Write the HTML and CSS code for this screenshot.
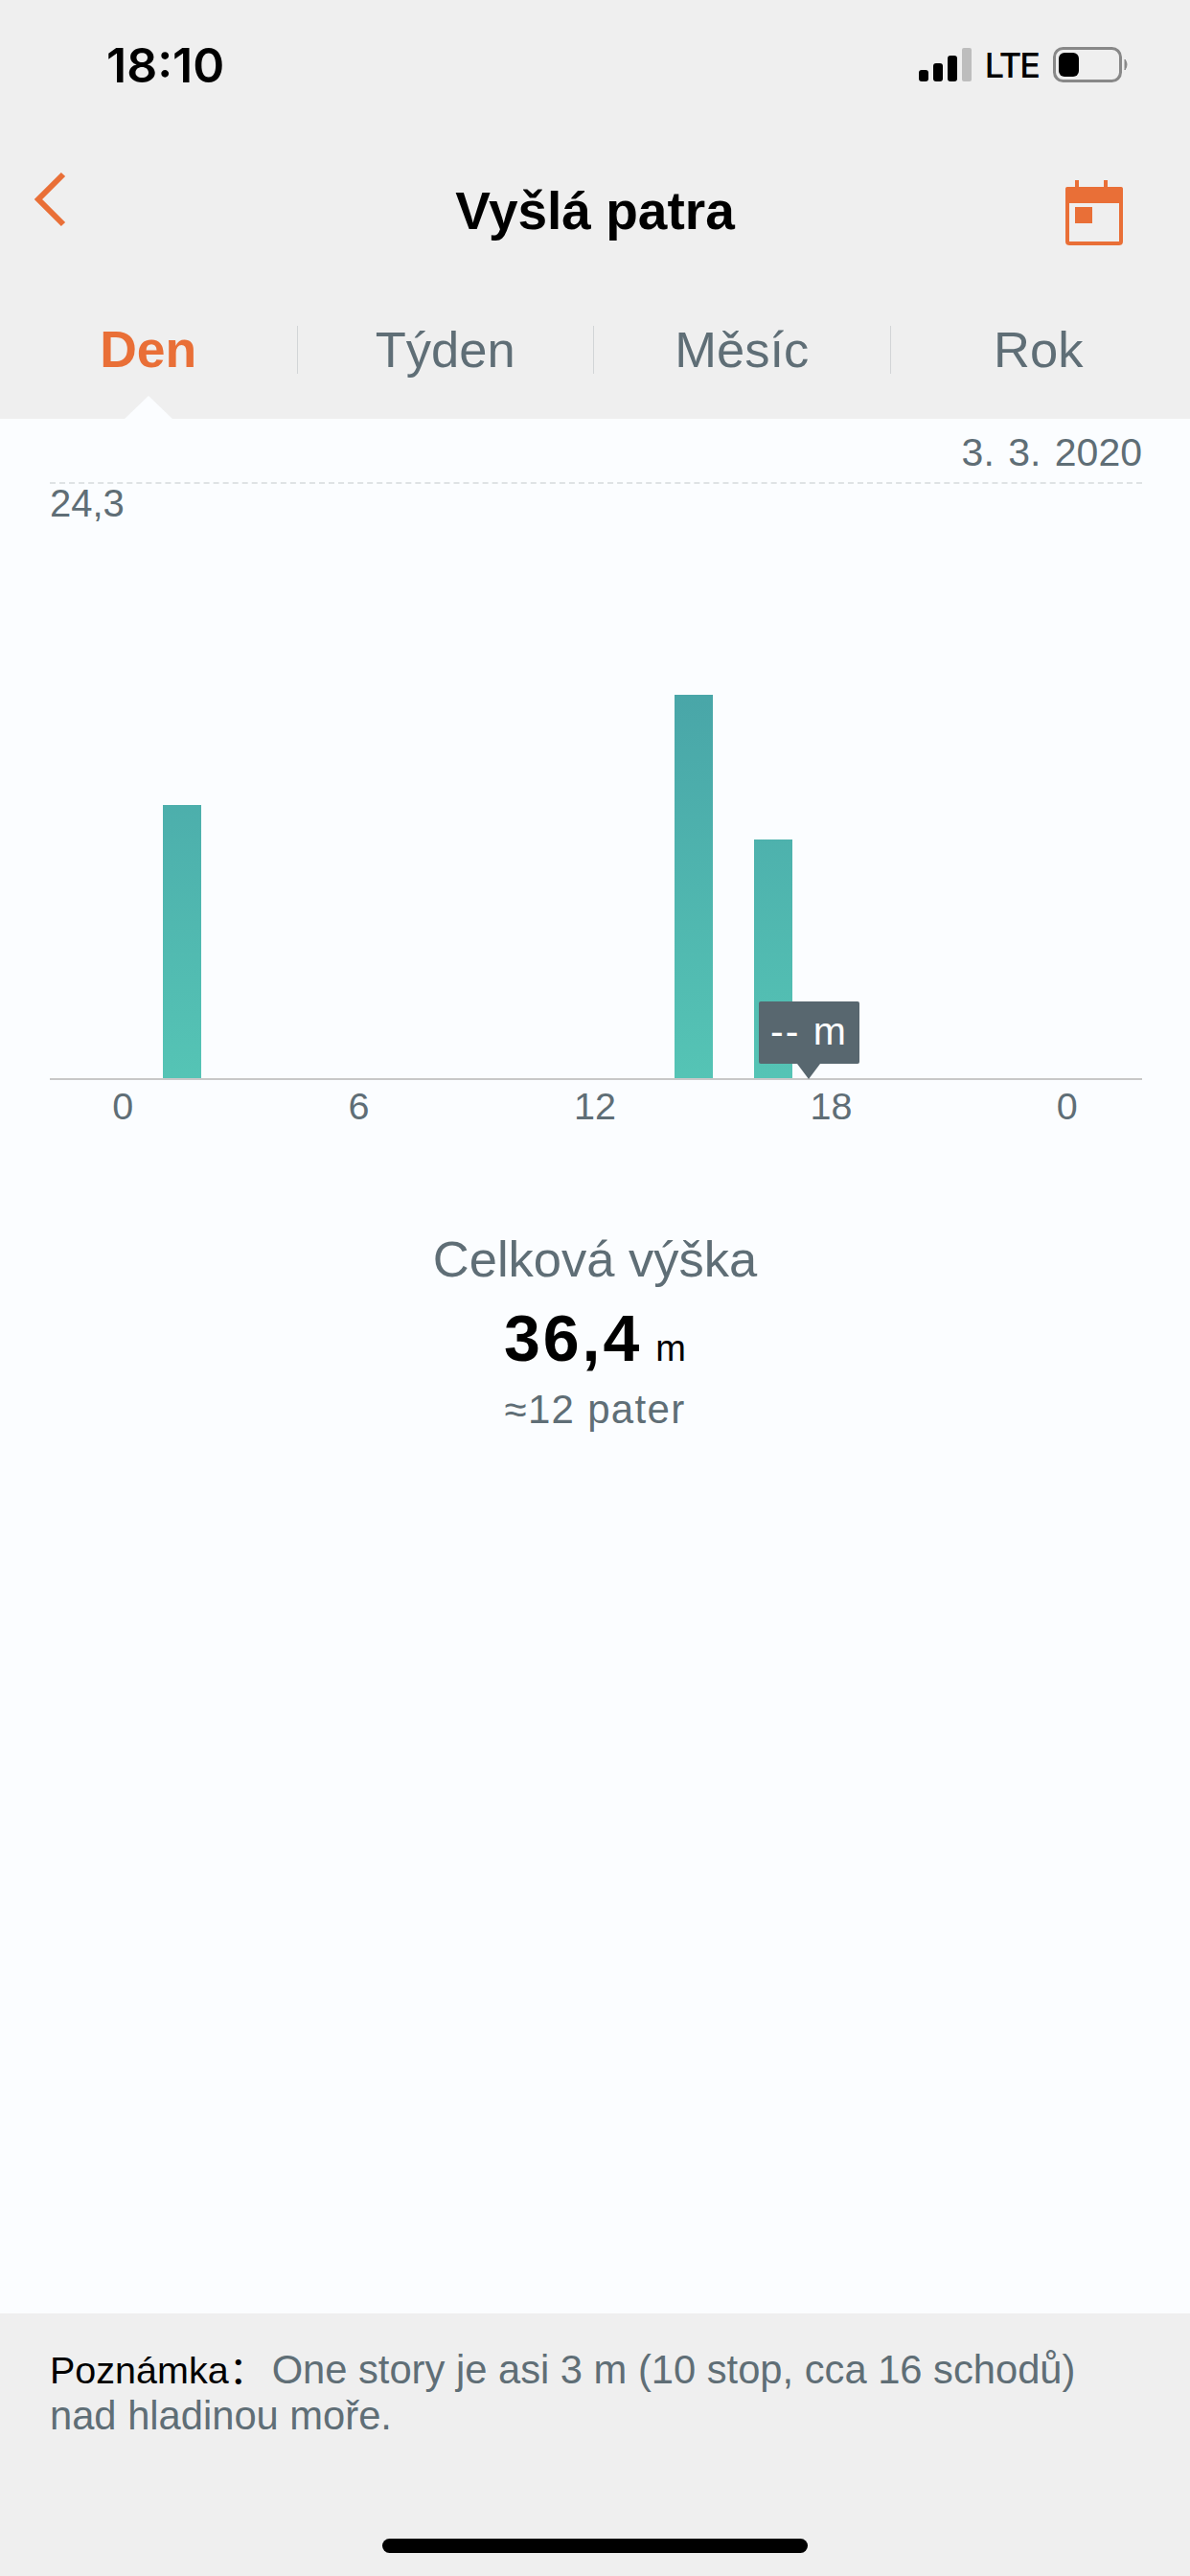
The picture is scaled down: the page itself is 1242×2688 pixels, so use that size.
FILE: index.html
```html
<!DOCTYPE html>
<html lang="cs">
<head>
    <meta charset="UTF-8">
    <meta name="viewport" content="width=device-width, initial-scale=1.0">
    <title>Vyšlá patra</title>
    <link rel="stylesheet" href="styles.css">
</head>
<body>
    <div class="screen">
        <header class="top">
            <div class="status-bar">
                <span class="time">18:10</span>
                <div class="status-icons">
                    <svg class="signal" width="56" height="36" viewBox="0 0 56 36">
                        <rect x="0" y="23" width="10" height="12" rx="3" fill="#000"/>
                        <rect x="15" y="16" width="10" height="19" rx="3" fill="#000"/>
                        <rect x="30" y="8" width="10" height="27" rx="3" fill="#000"/>
                        <rect x="45" y="0" width="10" height="35" rx="2" fill="#bdbdbd"/>
                    </svg>
                    <span class="network">LTE</span>
                    <svg class="battery" width="80" height="38" viewBox="0 0 80 38">
                        <rect x="1.5" y="1.5" width="69" height="34" rx="9" fill="none" stroke="#888" stroke-width="3"/>
                        <rect x="6" y="6" width="21" height="25" rx="6" fill="#000"/>
                        <path d="M75 13 Q79 18 75 24 Z" fill="#888" stroke="#888" stroke-width="1"/>
                    </svg>
                </div>
            </div>
            <div class="nav-bar">
                <svg class="back" width="40" height="64" viewBox="0 0 40 64">
                    <path d="M33 6 L7 32 L33 58" fill="none" stroke="#e96f37" stroke-width="6"/>
                </svg>
                <h1>Vyšlá patra</h1>
                <svg class="calendar" width="60" height="68" viewBox="0 0 60 68">
                    <path d="M12 0 V8 M42 0 V8" stroke="#e96f37" stroke-width="4"/>
                    <rect x="2" y="9" width="56" height="57" rx="2" fill="none" stroke="#e96f37" stroke-width="4"/>
                    <rect x="0" y="7" width="60" height="17" rx="2" fill="#e96f37"/>
                    <rect x="10" y="28" width="18" height="17" fill="#e96f37"/>
                </svg>
            </div>
            <nav class="tabs">
                <a class="tab active">Den</a>
                <a class="tab">Týden</a>
                <a class="tab">Měsíc</a>
                <a class="tab">Rok</a>
            </nav>
        </header>

        <main class="content">
            <div class="date">3. 3. 2020</div>
            <div class="chart">
                <div class="max-value">24,3</div>
                <div class="bars">
                    <div class="bar" style="grid-column: 2; height: 285px"></div>
                    <div class="bar" style="grid-column: 15; height: 400px"></div>
                    <div class="bar" style="grid-column: 17; height: 249px"></div>
                    <div class="tooltip">-- m</div>
                </div>
            </div>
            <div class="hours">
                <span>0</span>
                <span>6</span>
                <span>12</span>
                <span>18</span>
                <span>0</span>
            </div>
            <section class="total">
                <div class="total-label">Celková výška</div>
                <div class="total-value">36,4<small>m</small></div>
                <div class="total-floors">≈12 pater</div>
            </section>
        </main>

        <footer class="note">
            <p><b>Poznámka</b><span class="colon">：</span><span class="note-first">One story je asi 3 m (10 stop, cca 16 schodů)</span><br>nad hladinou moře.</p>
            <div class="home-bar"></div>
        </footer>
    </div>
</body>
</html>
```

FILE: styles.css
```css
* {
    box-sizing: border-box;
}
body {
    margin: 0;
    font-family: "Liberation Sans", Arial, sans-serif;
    color: #5f6e76;
    background-color: #fbfdff;
}
.screen {
    display: flex;
    flex-direction: column;
    width: 1242px;
    height: 2688px;
    overflow: hidden;
}

/* header */
.top {
    height: 437px;
    background-color: #efefef;
}
.status-bar {
    display: flex;
    justify-content: space-between;
    align-items: center;
    height: 136px;
    padding: 0 63px 0 111px;
}
.time {
    font-family: Inter, sans-serif;
    font-size: 50px;
    font-weight: 600;
    color: #000;
}
.status-icons {
    display: flex;
    align-items: center;
}
.signal {
    margin-right: 13px;
}
.network {
    font-family: Inter, sans-serif;
    font-size: 36px;
    font-weight: 500;
    letter-spacing: -2px;
    color: #000;
    margin-right: 15px;
}
.nav-bar {
    position: relative;
    display: flex;
    justify-content: space-between;
    align-items: flex-start;
    height: 164px;
    padding: 40px 70px 0 33px;
}
.nav-bar h1 {
    position: absolute;
    left: 0;
    right: 0;
    top: 54px;
    margin: 0;
    font-size: 55px;
    font-weight: 700;
    line-height: 60px;
    text-align: center;
    color: #000;
}
.calendar {
    margin-top: 12px;
}
.tabs {
    display: grid;
    grid-template-columns: repeat(4, 309.5px);
    margin-top: 40px;
}
.tab {
    position: relative;
    height: 50px;
    border-left: 1px solid #d2d5d7;
    font-size: 52.5px;
    line-height: 50px;
    text-align: center;
}
.tab:first-child {
    border-left: none;
}
.tab.active {
    font-size: 53.5px;
    font-weight: 700;
    color: #e96f37;
}
.tab.active::after {
    content: "";
    position: absolute;
    left: 50%;
    top: 73px;
    margin-left: -25px;
    border-left: 25px solid transparent;
    border-right: 25px solid transparent;
    border-bottom: 24px solid #fbfdff;
}

/* chart */
.content {
    flex: 1;
    padding-top: 15px;
}
.date {
    padding-right: 50px;
    font-size: 41px;
    word-spacing: 3px;
    line-height: 40px;
    text-align: right;
}
.chart {
    position: relative;
    display: flex;
    flex-direction: column;
    height: 624px;
    margin: 11px 50px 0 52px;
    border-top: 2px dashed #dfe3e5;
    border-bottom: 2px solid #c8c8c8;
}
.max-value {
    margin-top: -2px;
    font-size: 40px;
    line-height: 44px;
}
.bars {
    position: relative;
    flex: 1;
    display: grid;
    grid-template-columns: repeat(24, 41.1px);
    align-items: end;
    padding-left: 77px;
}
.bar {
    width: 40px;
    background: linear-gradient(to bottom, #49a6a8, #55c4b5) bottom / 100% 400px no-repeat;
}
.tooltip {
    position: absolute;
    left: 740px;
    bottom: 15px;
    width: 105px;
    height: 65px;
    border-radius: 2px;
    background-color: #58676f;
    color: #fff;
    font-size: 41px;
    letter-spacing: 2px;
    line-height: 62px;
    text-align: center;
}
.tooltip::after {
    content: "";
    position: absolute;
    left: 40px;
    top: 65px;
    border-left: 12px solid transparent;
    border-right: 12px solid transparent;
    border-top: 16px solid #58676f;
}
.hours {
    display: grid;
    grid-template-columns: repeat(5, 1fr);
    padding: 5px 5px 0;
    font-size: 39.5px;
    line-height: 44px;
    text-align: center;
}

/* totals */
.total {
    margin-top: 108px;
    text-align: center;
}
.total-label {
    font-size: 52.5px;
    line-height: 60px;
}
.total-value {
    margin-top: 14px;
    font-size: 68px;
    font-weight: 700;
    letter-spacing: 3px;
    line-height: 76px;
    color: #000;
}
.total-value small {
    margin-left: 14px;
    font-size: 38px;
    font-weight: 400;
    letter-spacing: 0;
}
.total-floors {
    margin-top: 1px;
    font-size: 42px;
    letter-spacing: 1.3px;
    line-height: 50px;
}

/* note */
.note {
    position: relative;
    height: 274px;
    padding: 33px 52px 0;
    background-color: #efefef;
}
.note p {
    margin: 0;
    font-size: 41.7px;
    line-height: 47px;
}
.note b {
    font-size: 39.5px;
    font-weight: 400;
    color: #000;
}
.colon {
    font-family: "Noto Sans CJK SC", sans-serif;
    font-size: 40px;
    margin-right: 5px;
    color: #000;
}
.home-bar {
    position: absolute;
    left: 399px;
    top: 235px;
    width: 444px;
    height: 15px;
    border-radius: 8px;
    background-color: #000;
}
```
